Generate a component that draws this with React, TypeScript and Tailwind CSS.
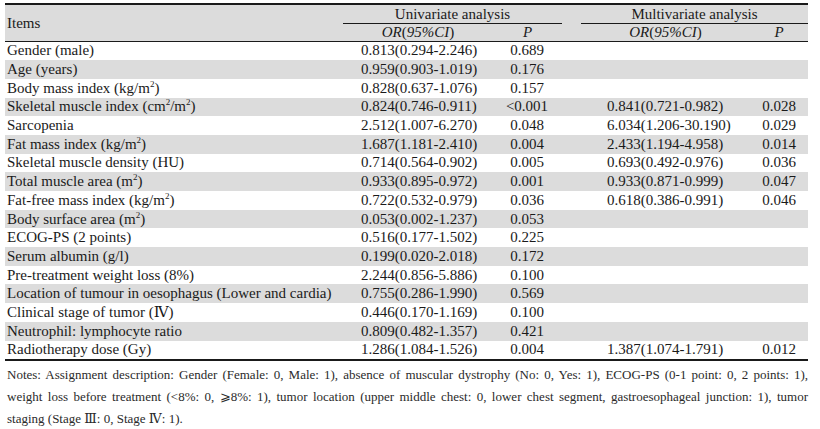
import React from 'react'

interface Row {
  item: React.ReactNode
  uor: string
  up: string
  mor?: string
  mp?: string
}

const sq = <sup className="text-[9px] -top-[6px] leading-none">2</sup>

const rows: Row[] = [
  { item: 'Gender (male)', uor: '0.813(0.294-2.246)', up: '0.689' },
  { item: 'Age (years)', uor: '0.959(0.903-1.019)', up: '0.176' },
  { item: <>Body mass index (kg/m{sq})</>, uor: '0.828(0.637-1.076)', up: '0.157' },
  { item: <>Skeletal muscle index (cm{sq}/m{sq})</>, uor: '0.824(0.746-0.911)', up: '<0.001', mor: '0.841(0.721-0.982)', mp: '0.028' },
  { item: 'Sarcopenia', uor: '2.512(1.007-6.270)', up: '0.048', mor: '6.034(1.206-30.190)', mp: '0.029' },
  { item: <>Fat mass index (kg/m{sq})</>, uor: '1.687(1.181-2.410)', up: '0.004', mor: '2.433(1.194-4.958)', mp: '0.014' },
  { item: 'Skeletal muscle density (HU)', uor: '0.714(0.564-0.902)', up: '0.005', mor: '0.693(0.492-0.976)', mp: '0.036' },
  { item: <>Total muscle area (m{sq})</>, uor: '0.933(0.895-0.972)', up: '0.001', mor: '0.933(0.871-0.999)', mp: '0.047' },
  { item: <>Fat-free mass index (kg/m{sq})</>, uor: '0.722(0.532-0.979)', up: '0.036', mor: '0.618(0.386-0.991)', mp: '0.046' },
  { item: <>Body surface area (m{sq})</>, uor: '0.053(0.002-1.237)', up: '0.053' },
  { item: 'ECOG-PS (2 points)', uor: '0.516(0.177-1.502)', up: '0.225' },
  { item: 'Serum albumin (g/l)', uor: '0.199(0.020-2.018)', up: '0.172' },
  { item: 'Pre-treatment weight loss (8%)', uor: '2.244(0.856-5.886)', up: '0.100' },
  { item: 'Location of tumour in oesophagus (Lower and cardia)', uor: '0.755(0.286-1.990)', up: '0.569' },
  { item: 'Clinical stage of tumor (Ⅳ)', uor: '0.446(0.170-1.169)', up: '0.100' },
  { item: 'Neutrophil: lymphocyte ratio', uor: '0.809(0.482-1.357)', up: '0.421' },
  { item: 'Radiotherapy dose (Gy)', uor: '1.286(1.084-1.526)', up: '0.004', mor: '1.387(1.074-1.791)', mp: '0.012' },
]

export default function App() {
  return (
    <div className="w-[820px] h-[429px] bg-white px-[5px] pt-[3px] text-[#1a1a1a] font-['Liberation_Serif','DejaVu_Serif','Noto_Sans_CJK_SC',serif] overflow-hidden">
      {/* Table */}
      <div className="w-[803px] text-[15px] leading-none">
        {/* Header */}
        <div className="bg-[#dcdcdc] border-t-2 border-[#1a1a1a] border-b-[1.5px] flex">
          <div className="w-[338px] flex items-center pl-[2px] pt-[1px]">Items</div>
          <div className="w-[219px]">
            <div className="h-[18.5px] flex items-center justify-center border-b-[1.5px] border-[#1a1a1a] pt-[1px]">
              Univariate analysis
            </div>
            <div className="h-[17px] flex items-center">
              <div className="w-[150px] text-center italic">OR<span className="not-italic">(</span>95%CI<span className="not-italic">)</span></div>
              <div className="w-[69px] text-center italic">P</div>
            </div>
          </div>
          <div className="w-[19px]" />
          <div className="w-[227px]">
            <div className="h-[18.5px] flex items-center justify-center border-b-[1.5px] border-[#1a1a1a] pt-[1px]">
              Multivariate analysis
            </div>
            <div className="h-[17px] flex items-center">
              <div className="w-[169px] text-center italic">OR<span className="not-italic">(</span>95%CI<span className="not-italic">)</span></div>
              <div className="w-[58px] text-center italic">P</div>
            </div>
          </div>
        </div>

        {/* Body */}
        <div className="border-b-2 border-[#1a1a1a]">
          {rows.map((r, i) => (
            <div key={i} className={`flex items-center h-[18.7px] ${i % 2 === 1 ? 'bg-[#dcdcdc]' : ''}`}>
              <div className="w-[338px] pl-[2px] whitespace-nowrap">{r.item}</div>
              <div className="w-[150px] pl-[18px]">{r.uor}</div>
              <div className="w-[69px] text-center pr-[1px]">{r.up}</div>
              <div className="w-[19px]" />
              <div className="w-[169px] pl-[26px]">{r.mor}</div>
              <div className="w-[58px] text-center">{r.mp}</div>
            </div>
          ))}
        </div>
      </div>

      {/* Notes */}
      <div className="w-[803px] text-[13px] leading-[22px] text-[#2a2a2a] pl-[2px] pt-[3px]">
        <div className="text-justify [text-align-last:justify] whitespace-nowrap">
          Notes: Assignment description: Gender (Female: 0, Male: 1), absence of muscular dystrophy (No: 0, Yes: 1), ECOG-PS (0-1 point: 0, 2 points: 1),
        </div>
        <div className="text-justify [text-align-last:justify]">
          weight loss before treatment (&lt;8%: 0, ⩾8%: 1), tumor location (upper middle chest: 0, lower chest segment, gastroesophageal junction: 1), tumor
        </div>
        <div>staging (Stage Ⅲ: 0, Stage Ⅳ: 1).</div>
      </div>
    </div>
  )
}
